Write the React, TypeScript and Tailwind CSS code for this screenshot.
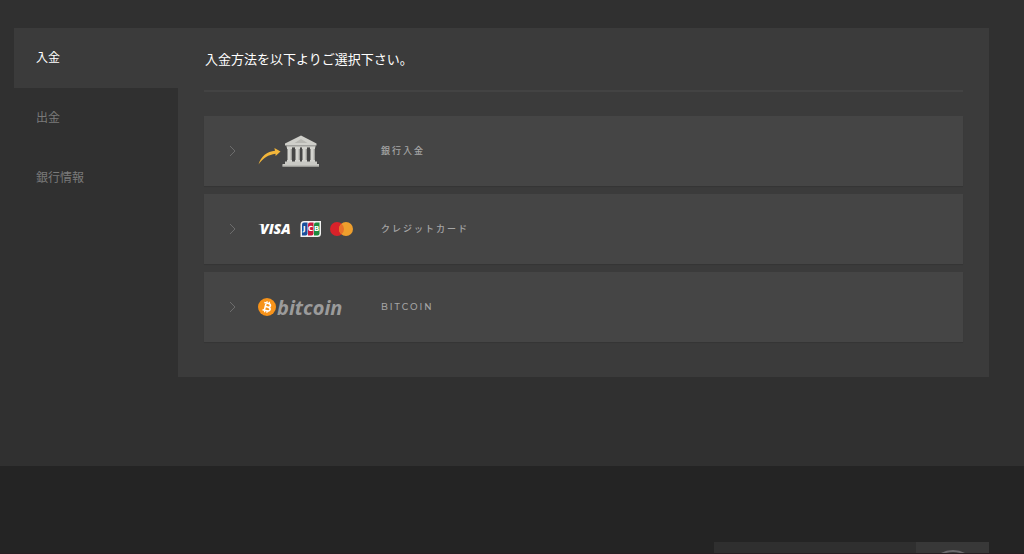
import type { ReactNode } from 'react'

interface Tab {
  id: string
  label: string
}

interface Method {
  id: string
  label: string
  logo: ReactNode
}

const TABS: Tab[] = [
  { id: 'deposit', label: '入金' },
  { id: 'withdraw', label: '出金' },
  { id: 'bank', label: '銀行情報' },
]

const COLUMNS = [28, 36, 43, 51]

function BankLogo() {
  return (
    <svg width="62" height="32" viewBox="0 0 62 32" aria-hidden="true">
      <path d="M0.5 29.5C3 21.500 9 16.500 17 15.800L16.400 13L22.500 16.600L17.600 21L17.500 18.800C10.500 19.500 5 23.500 0.500 29.500Z" fill="#f3b63a" />
      <path d="M43 0.500L58.500 8.500V10.500H27V8.500Z" fill="#cfcfca" />
      <path d="M43 4L49.500 8H36.500Z" fill="#b7b7b2" />
      <path d="M28.500 10.500H57.500V12.500H28.500Z" fill="#b9b9b4" />
      {COLUMNS.map((x) => (
        <g key={x}>
          <path d={`M${x + 1} 12H${x + 6}V14H${x + 5.5}V25H${x + 6}V27H${x + 1}V25H${x + 1.5}V14H${x + 1}Z`} fill="#d3d3ce" />
          <path d={`M${x + 4.5} 14H${x + 5.5}V25H${x + 4.5}Z`} fill="#b0b0ab" />
        </g>
      ))}
      <path d="M27 26.500H59V29H61V31.500H24.500V29H27Z" fill="#c9c9c4" />
      <path d="M24.500 30.500H61V31.500H24.500Z" fill="#a9a9a4" />
    </svg>
  )
}

function CardLogos() {
  return (
    <svg width="96" height="18" viewBox="0 0 96 18" aria-hidden="true">
      <text x="2" y="14" fontSize="14" className="fill-white font-['Open_Sans',sans-serif] font-extrabold italic">VISA</text>
      <path d="M0.500 4H4.500L6.500 7.500C5 5.500 3 4.600 0.500 4.300Z" fill="#fff" />

      <path d="M46 1H63V13.500Q63 17 59.500 17H42.500V4.500Q42.500 1 46 1Z" fill="#f2f2f2" />
      <path d="M46 2.500H49.500V13.500Q49.500 15.500 47.500 15.500H44V4.500Q44 2.500 46 2.500Z" fill="#1a4f9c" />
      <path d="M52 2.500H55.500V13.500Q55.500 15.500 53.500 15.500H50V4.500Q50 2.500 52 2.500Z" fill="#c8193c" />
      <path d="M58 2.500H61.500V13.500Q61.500 15.500 59.500 15.500H56V4.500Q56 2.500 58 2.500Z" fill="#1d8a3e" />
      <text x="45 50 56" y="11" fontSize="7" className="fill-white font-['DejaVu_Sans',sans-serif] font-bold">JCB</text>

      <circle cx="79" cy="9" r="7" fill="#d9222a" />
      <circle cx="88" cy="9" r="7" fill="#ee9f2d" />
      <path d="M83.500 3.640A7 7 0 0 1 83.500 14.360A7 7 0 0 1 83.500 3.640Z" fill="#e8702a" />
    </svg>
  )
}

function BitcoinLogo() {
  return (
    <svg width="96" height="36" viewBox="0 0 96 36" aria-hidden="true">
      <circle cx="9" cy="18" r="9" fill="#f7931a" />
      <g transform="translate(0 8) rotate(14 9 10)" fill="none" stroke="#fff" strokeWidth="1.600">
        <path d="M5.300 6.300H9.600Q12 6.300 12 8.100T9.600 9.900H7.200M9.600 9.900Q12.600 9.900 12.600 11.800T9.800 13.700H5.300M7.200 6.300V13.700" />
        <path d="M7.800 4.300V6.500M10.200 4.300V6.500M7.800 13.500V15.700M10.200 13.500V15.700" strokeWidth="1.200" />
      </g>
      <text x="19" y="26" fontSize="20" className="fill-[#9b9b9b] font-['Open_Sans',sans-serif] font-bold italic">bitcoin</text>
    </svg>
  )
}

const METHODS: Method[] = [
  { id: 'bank', label: '銀行入金', logo: <BankLogo /> },
  { id: 'card', label: 'クレジットカード', logo: <CardLogos /> },
  { id: 'bitcoin', label: 'BITCOIN', logo: <BitcoinLogo /> },
]

function SideNav({ activeId }: { activeId: string }) {
  return (
    <nav className="w-41 shrink-0">
      {TABS.map((tab) => (
        <a
          key={tab.id}
          href={`#${tab.id}`}
          className={`flex h-15 items-center pb-0.5 pl-[22px] text-xs ${
            tab.id === activeId ? 'bg-[#3b3b3b] text-white' : 'text-[#7a7a7a]'
          }`}
        >
          {tab.label}
        </a>
      ))}
    </nav>
  )
}

function MethodRow({ method }: { method: Method }) {
  return (
    <button type="button" className="flex h-[70px] w-full items-center bg-[#454545] pl-[25px] text-left shadow-[0_1px_1px_rgba(0,0,0,0.1)]">
      <svg width="8" height="12" viewBox="0 0 8 12" className="mr-[21px]" fill="none" stroke="#6c6c6c" aria-hidden="true">
        <path d="M1 1L6 6L1 11" />
      </svg>
      <span className="w-[123px] shrink-0">{method.logo}</span>
      <span className="font-[Montserrat,Inter,'Noto_Sans_CJK_JP',sans-serif] text-[9px] font-medium tracking-[2px] text-[#a6a6a6]">{method.label}</span>
    </button>
  )
}

export default function App() {
  return (
    <div className="flex h-screen flex-col overflow-hidden border-b border-[#281e22] bg-[#242424] font-['Noto_Sans_CJK_JP',sans-serif]">
      <main className="flex items-start bg-[#303030] pt-7 pr-[35px] pb-[89px] pl-[14px]">
        <SideNav activeId="deposit" />
        <section className="min-w-0 flex-1 bg-[#3b3b3b] px-[26px] pb-[35px]">
          <h1 className="flex h-16 items-center border-b-2 border-[#434343] pl-px text-[13px] text-white">入金方法を以下よりご選択下さい。</h1>
          <div className="mt-6 flex flex-col gap-2">
            {METHODS.map((method) => (
              <MethodRow key={method.id} method={method} />
            ))}
          </div>
        </section>
      </main>

      <footer className="flex justify-end pt-[76px] pr-[35px]">
        <form className="flex h-18">
          <input type="text" aria-label="検索" className="w-[202px] bg-[#2f2f2f] px-4 text-xs text-white outline-none" />
          <button type="button" aria-label="送信" className="flex w-[73px] justify-center bg-[#383838] pt-2">
            <svg width="50" height="50" viewBox="0 0 50 50" fill="none" stroke="#6b696c" strokeWidth="2" aria-hidden="true">
              <circle cx="25" cy="25" r="24" />
            </svg>
          </button>
        </form>
      </footer>
    </div>
  )
}
